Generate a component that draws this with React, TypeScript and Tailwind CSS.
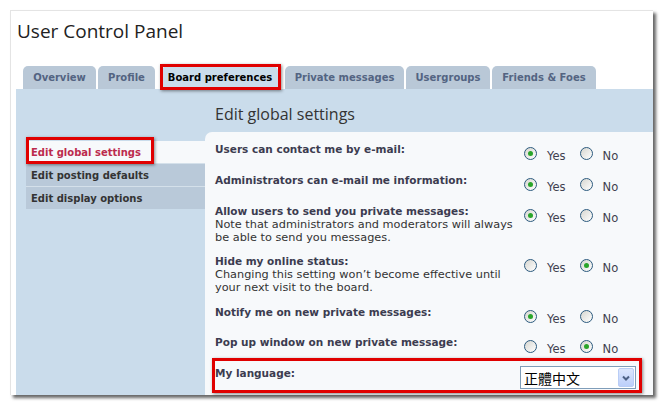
import React from 'react';

type Row = { label: string; note?: string[]; yes: boolean; h: string };

const rows: Row[] = [
  { label: 'Users can contact me by e-mail:', yes: true, h: 'h-[31px]' },
  { label: 'Administrators can e-mail me information:', yes: true, h: 'h-[31px]' },
  {
    label: 'Allow users to send you private messages:',
    note: ['Note that administrators and moderators will always', 'be able to send you messages.'],
    yes: true,
    h: 'h-[50px]',
  },
  {
    label: 'Hide my online status:',
    note: ['Changing this setting won\u2019t become effective until', 'your next visit to the board.'],
    yes: false,
    h: 'h-[51px]',
  },
  { label: 'Notify me on new private messages:', yes: true, h: 'h-[30px]' },
  { label: 'Pop up window on new private message:', yes: false, h: 'h-[31px]' },
];

const tabs = [
  { name: 'Overview', cls: 'w-[73px]' },
  { name: 'Profile', cls: 'w-[57px] ml-[2px]' },
  { name: 'Board preferences', cls: 'w-[116px] ml-[7px]', active: true },
  { name: 'Private messages', cls: 'w-[119px] ml-[7px]' },
  { name: 'Usergroups', cls: 'w-[84px] ml-[2px]' },
  { name: 'Friends & Foes', cls: 'w-[104px] ml-[2px]' },
];

function Radio({ checked }: { checked: boolean }) {
  return (
    <span className="w-[13px] h-[13px] shrink-0 rounded-full border border-[#2c5a7e] bg-gradient-to-br from-[#d6d6d0] to-white flex items-center justify-center">
      {checked && <span className="w-[5px] h-[5px] rounded-full bg-[#2aa52a]" />}
    </span>
  );
}

function YesNo({ yes }: { yes: boolean }) {
  return (
    <div className="flex items-start pt-[5px] text-[11.5px] leading-[13px] text-[#3f3f4f]">
      <Radio checked={yes} />
      <span className="ml-[10px] mt-[3px]">Yes</span>
      <span className="ml-[14px]">
        <Radio checked={!yes} />
      </span>
      <span className="ml-[10px] mt-[3px]">No</span>
    </div>
  );
}

export default function App() {
  return (
    <div className="relative w-[665px] h-[406px] bg-white pt-[10px] pl-[10px] overflow-hidden font-['DejaVu_Sans',Verdana,sans-serif]">
      <div className="w-[643px] h-[385px] bg-white border-l border-t border-[#e4e4e4] shadow-[3px_3px_3px_rgba(0,0,0,0.6)] flex flex-col">
        <h1 className="pl-[6px] pt-[8px] h-[55px] text-[19px] leading-[24px] text-[#222] font-['Open_Sans',sans-serif]">
          User Control Panel
        </h1>

        <div className="flex pl-[12px] h-[23px]">
          {tabs.map((t) => (
            <div
              key={t.name}
              className={`${t.cls} h-[23px] rounded-t-[5px] flex items-center justify-center text-[10px] font-bold ${
                t.active ? 'bg-[#cadceb] text-black' : 'bg-[#b9c8d7] text-[#536482]'
              }`}
            >
              {t.name}
            </div>
          ))}
        </div>

        <div className="flex-1 ml-[5px] bg-[#cadceb] flex">
          <div className="w-[189px] pt-[52px] pl-[10px]">
            <div className="h-[22px] pl-[5px] flex items-center bg-[#f7f9fb] text-[10px] font-bold text-[#bc2a4d]">
              Edit global settings
            </div>
            <div className="h-[23px] pl-[5px] flex items-center bg-[#b9c9d9] border-t border-[#d4e0ea] text-[10px] font-bold text-[#333]">
              Edit posting defaults
            </div>
            <div className="h-[23px] pl-[5px] flex items-center bg-[#b9c9d9] border-t border-[#d4e0ea] text-[10px] font-bold text-[#333]">
              Edit display options
            </div>
          </div>

          <div className="flex-1 flex flex-col">
            <h2 className="h-[43px] pt-[16px] pl-[10px] text-[16px] leading-[18px] text-[#333] font-['Open_Sans',sans-serif]">
              Edit global settings
            </h2>
            <div className="flex-1 bg-[#f7f9fb] rounded-tl-[7px] pt-[1px]">
              {rows.map((r) => (
                <div key={r.label} className={`${r.h} flex pt-[9px] pl-[10px]`}>
                  <div className="w-[309px] text-[11.3px] text-[#333]">
                    <div className="font-bold text-[10.5px] leading-[14px] text-[#3c3c50]">{r.label}</div>
                    {r.note?.map((n) => (
                      <div key={n} className="leading-[13px]">
                        {n}
                      </div>
                    ))}
                  </div>
                  <YesNo yes={r.yes} />
                </div>
              ))}
              <div className="flex pt-[9px] pl-[10px]">
                <div className="w-[305px] text-[10.5px] font-bold leading-[14px] text-[#3c3c50]">My language:</div>
                <div className="w-[116px] h-[23px] border border-[#7f9db9] bg-white flex items-center">
                  <span className="flex-1 pl-[3px] text-[14px] leading-[16px] text-black font-['Noto_Sans_CJK_TC',sans-serif]">
                    正體中文
                  </span>
                  <span className="w-[16px] h-[19px] mr-[1px] rounded-[2px] border border-[#b9cdf6] bg-gradient-to-b from-[#dce6fd] to-[#bccffa] flex items-center justify-center">
                    <svg width="8" height="6" viewBox="0 0 8 6">
                      <path d="M1 1.5 L4 4.5 L7 1.5" fill="none" stroke="#4d6185" strokeWidth="2" />
                    </svg>
                  </span>
                </div>
              </div>
            </div>
          </div>
        </div>
      </div>

      {/* red annotation boxes */}
      <div className="absolute left-[160px] top-[64px] w-[121px] h-[26px] border-[3px] border-[#e00000] shadow-[1px_1px_3px_rgba(0,0,0,0.45)]" />
      <div className="absolute left-[26px] top-[137px] w-[128px] h-[27px] border-[3px] border-[#e00000] shadow-[1px_1px_3px_rgba(0,0,0,0.45)]" />
      <div className="absolute left-[212px] top-[358px] w-[430px] h-[35px] border-[3px] border-[#e00000] shadow-[1px_1px_3px_rgba(0,0,0,0.45)]" />
    </div>
  );
}
